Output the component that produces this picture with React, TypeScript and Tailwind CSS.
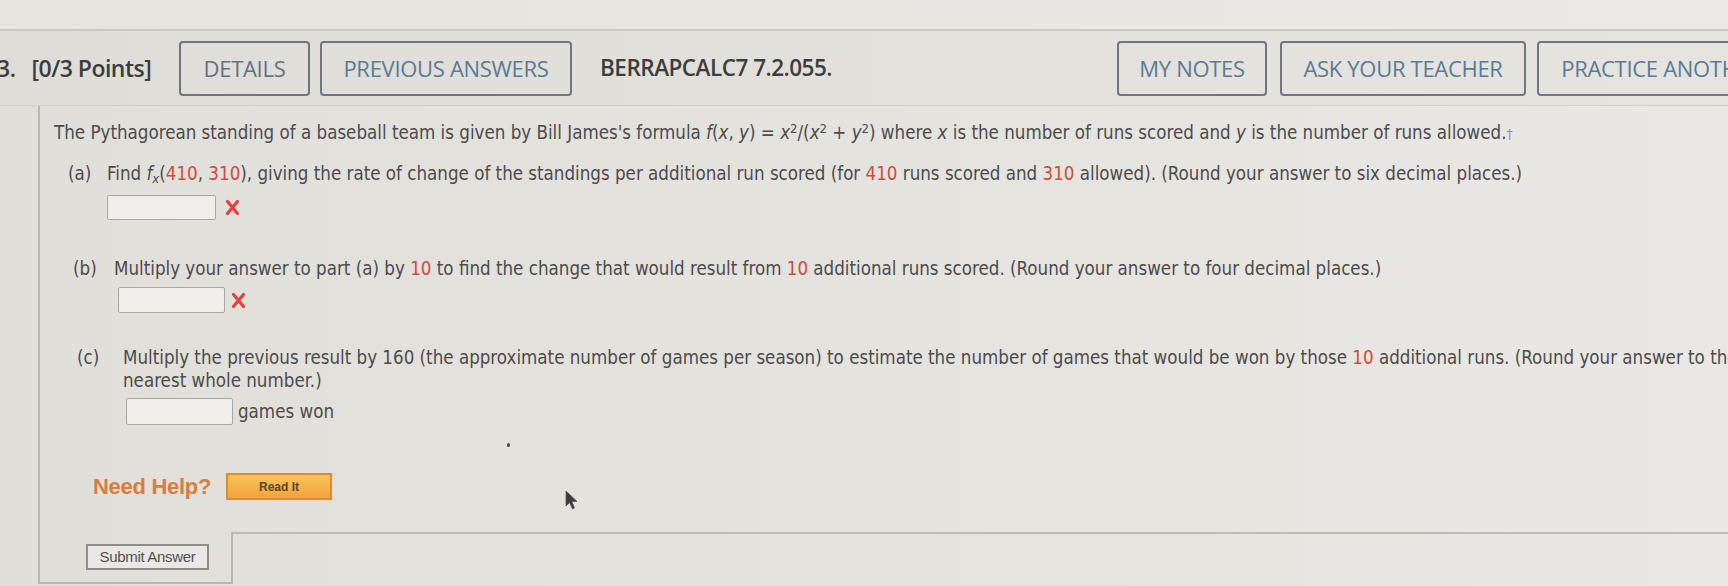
import React from "react";

function RedX() {
  return (
    <svg width="15" height="17" viewBox="0 0 15 17" className="shrink-0">
      <path d="M2.5 2.5 L12.5 14.5 M12.5 2.5 L2.5 14.5" stroke="#e0433a" strokeWidth="3.2" strokeLinecap="round" />
    </svg>
  );
}

function Red({ children }: { children: React.ReactNode }) {
  return <span className="text-[#d04a3d]">{children}</span>;
}

function HeaderButton({ label, w, color = "text-[#5a7a98]" }: { label: string; w: string; color?: string }) {
  return (
    <div
      className={`flex h-[55px] shrink-0 items-center justify-center rounded-[4px] border-2 border-[#6f767d] text-[22px] font-medium tracking-[-0.3px] ${w} ${color}`}
    >
      {label}
    </div>
  );
}

function AnswerBox({ w = "w-[109px]", h = "h-[25px]" }: { w?: string; h?: string }) {
  return <div className={`${w} ${h} shrink-0 rounded-[2px] border border-[#a7a7a5] bg-[#efeeeb]`} />;
}

export default function App() {
  return (
    <div className="relative h-[586px] w-[1728px] overflow-hidden bg-gradient-to-r from-[#e1dfda] via-[#e5e3de] to-[#e9e8e4]">
      {/* top strip */}
      <div className="h-[31px] border-b-2 border-[#cac8c2] bg-gradient-to-r from-[#e6e4df] to-[#ebe9e5]" />

      {/* header row */}
      <header className="flex h-[75px] items-center border-b border-[#d2d0ca] bg-gradient-to-r from-[#dfddd7] to-[#e6e4df] font-['Open_Sans',sans-serif]">
        <div className="ml-[-3px] flex w-[182px] shrink-0 text-[23px] font-semibold tracking-[-0.5px] text-[#3c3c3c]">
          <span>3.</span>
          <span className="ml-[16px]">[0/3 Points]</span>
        </div>
        <HeaderButton label="DETAILS" w="w-[131px]" color="text-[#5f7386]" />
        <div className="ml-[10px]">
          <HeaderButton label="PREVIOUS ANSWERS" w="w-[252px]" />
        </div>
        <div className="ml-[28px] w-[517px] shrink-0 text-[22.5px] font-semibold tracking-[-0.5px] text-[#3d3d3d]">
          BERRAPCALC7 7.2.055.
        </div>
        <HeaderButton label="MY NOTES" w="w-[150px]" />
        <div className="ml-[13px]">
          <HeaderButton label="ASK YOUR TEACHER" w="w-[246px]" />
        </div>
        <div className="ml-[11px]">
          <HeaderButton label="PRACTICE ANOTHER" w="w-[250px]" />
        </div>
      </header>

      {/* question panel */}
      <div className="ml-[38px] border-l-2 border-[#b9b7b2] font-['DejaVu_Sans_Condensed','DejaVu_Sans',sans-serif] text-[18.6px] text-[#4c4c4c]">
        <div className="pl-[14px] pt-[15px]">
          <p className="whitespace-nowrap leading-[24px]">
            The Pythagorean standing of a baseball team is given by Bill James's formula{" "}
            <i>f</i>(<i>x</i>, <i>y</i>) = <i>x</i>
            <sup className="text-[13px]">2</sup>/(<i>x</i>
            <sup className="text-[13px]">2</sup> + <i>y</i>
            <sup className="text-[13px]">2</sup>) where <i>x</i> is the number of runs scored and <i>y</i> is the number of runs
            allowed.<span className="text-[14px] text-[#8b90c2]">†</span>
          </p>
        </div>

        {/* (a) */}
        <div className="mt-[16px] flex pl-[28px]">
          <div className="w-[39px] shrink-0 leading-[24px]">(a)</div>
          <div>
            <p className="whitespace-nowrap leading-[24px]">
              Find <i>f</i>
              <sub className="text-[13px]">
                <i>x</i>
              </sub>
              (<Red>410</Red>, <Red>310</Red>), giving the rate of change of the standings per additional run scored (for{" "}
              <Red>410</Red> runs scored and <Red>310</Red> allowed). (Round your answer to six decimal places.)
            </p>
            <div className="mt-[9px] flex items-center gap-[9px]">
              <AnswerBox />
              <RedX />
            </div>
          </div>
        </div>

        {/* (b) */}
        <div className="mt-[37px] flex pl-[33px]">
          <div className="w-[41px] shrink-0 leading-[24px]">(b)</div>
          <div>
            <p className="whitespace-nowrap leading-[24px]">
              Multiply your answer to part (a) by <Red>10</Red> to find the change that would result from <Red>10</Red>{" "}
              additional runs scored. (Round your answer to four decimal places.)
            </p>
            <div className="ml-[4px] mt-[6px] flex items-center gap-[6px]">
              <AnswerBox w="w-[107px]" h="h-[26px]" />
              <RedX />
            </div>
          </div>
        </div>

        {/* (c) */}
        <div className="mt-[33px] flex pl-[37px]">
          <div className="w-[46px] shrink-0 leading-[23px]">(c)</div>
          <div>
            <p className="w-[1800px] leading-[23px]">
              Multiply the previous result by 160 (the approximate number of games per season) to estimate the number of games
              that would be won by those <Red>10</Red> additional runs. (Round your answer to the
              <br />
              nearest whole number.)
            </p>
            <div className="ml-[3px] mt-[6px] flex items-center gap-[5px]">
              <AnswerBox w="w-[107px]" h="h-[27px]" />
              <span className="leading-[24px]">games won</span>
            </div>
          </div>
        </div>

        {/* need help */}
        <div className="mt-[45px] flex items-center pl-[53px]">
          <span className="font-['Liberation_Sans',Arial,sans-serif] text-[22px] font-bold tracking-[-0.3px] text-[#db7b3f]">
            Need Help?
          </span>
          <div className="ml-[15px] flex h-[27px] w-[106px] items-center justify-center border-2 border-[#e9852c] bg-gradient-to-b from-[#f9c35c] to-[#f2a43a] font-['Liberation_Sans',Arial,sans-serif] text-[12px] font-bold text-[#5a4630]">
            Read It
          </div>
        </div>

        {/* bottom: submit tab + panel bottom line */}
        <div className="mt-[29px] flex">
          <div className="flex h-[52px] w-[193px] shrink-0 items-start border-b-2 border-r-2 border-[#b9b7b2] pl-[46px] pt-[12px]">
            <div className="flex h-[26px] w-[123px] items-center justify-center border-2 border-[#8d8d8b] bg-[#e9e8e5] font-['Liberation_Sans',Arial,sans-serif] text-[15px] tracking-[-0.3px] text-[#515151]">
              Submit Answer
            </div>
          </div>
          <div className="flex-1 border-t-2 border-[#bdbbb6]" />
        </div>
      </div>

      {/* mouse pointer over the page */}
      <svg className="absolute left-[565px] top-[490px]" width="14" height="20" viewBox="0 0 14 20">
        <path d="M1 1 L1 16 L4.5 12.5 L7.5 19 L9.5 18 L6.8 11.5 L12 11.5 Z" fill="#3b3b3b" stroke="#555" strokeWidth="0.8" />
      </svg>
      {/* speck on screen */}
      <div className="absolute left-[507px] top-[443px] h-[4px] w-[3px] rounded-full bg-[#4a4a4a]" />
    </div>
  );
}
